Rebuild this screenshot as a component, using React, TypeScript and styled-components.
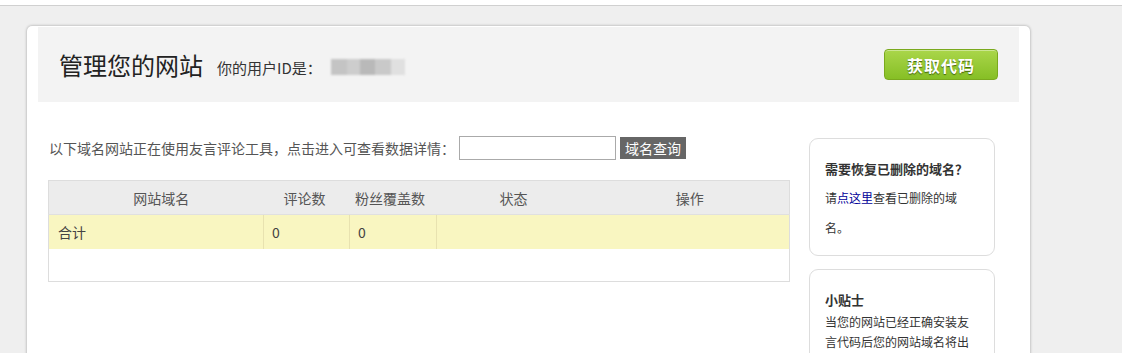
import styled, { createGlobalStyle } from "styled-components";

const GlobalStyle = createGlobalStyle`
  html, body {
    margin: 0;
    padding: 0;
  }
  body {
    background-color: #ffffff;
    font-family: "Noto Sans CJK SC", "Liberation Sans", sans-serif;
    color: #333333;
  }
`;

const Page = styled.div`
  margin-top: 5px;
  border-top: 1px solid #d0d0d0;
  background-color: #efefef;
  min-height: 347px;
  padding: 20px 0 0 27px;
  overflow: hidden;
`;

const Card = styled.div`
  width: 981px;
  min-height: 340px;
  padding: 1px 11px 0 11px;
  background-color: #ffffff;
  border-radius: 5px;
  box-shadow: 0 0 3px rgba(0, 0, 0, 0.35);
`;

const Header = styled.div`
  display: flex;
  align-items: center;
  height: 75px;
  padding: 0 21px 0 21px;
  background-color: #f3f3f3;
`;

const Title = styled.h1`
  margin: 0;
  font-size: 24px;
  font-weight: normal;
  color: #222222;
`;

const UserId = styled.span`
  margin-left: 14px;
  margin-top: 5px;
  font-size: 15px;
  color: #333333;
  display: flex;
  align-items: center;
`;

const Blur = styled.span`
  display: inline-flex;
  margin-left: 9px;
  height: 16px;
  filter: blur(0.8px);
`;

const BlurBlock = styled.span<{ $w: number; $c: string }>`
  width: ${(p) => p.$w}px;
  height: 16px;
  background-color: ${(p) => p.$c};
`;

const GetCode = styled.button`
  margin-left: auto;
  width: 114px;
  height: 31px;
  border: 1px solid #7aa91e;
  border-radius: 4px;
  background: linear-gradient(#aad64a, #86bf25);
  box-shadow: inset 0 1px 0 rgba(255, 255, 255, 0.4);
  color: #ffffff;
  font-family: "Noto Sans CJK SC", sans-serif;
  font-size: 16px;
  font-weight: bold;
  letter-spacing: 1px;
  text-shadow: 0 1px 1px rgba(40, 70, 0, 0.8);
`;

const Body = styled.div`
  display: flex;
  gap: 19px;
  padding: 35px 0 0 10px;
`;

const Main = styled.div`
  width: 742px;
`;

const SearchRow = styled.div`
  display: flex;
  align-items: center;
  height: 24px;
  margin-top: -1px;
  font-size: 14px;
  color: #555555;
`;

const Lead = styled.span`
  margin-left: 1px;
  margin-right: 4px;
`;

const SearchInput = styled.input`
  box-sizing: border-box;
  width: 157px;
  height: 24px;
  border: 1px solid #aaaaaa;
  padding: 0 4px;
`;

const SearchButton = styled.button`
  margin-left: 4px;
  height: 22px;
  padding: 0 5px;
  border: none;
  background-color: #666666;
  color: #ffffff;
  font-family: "Noto Sans CJK SC", sans-serif;
  font-size: 14px;
`;

const Table = styled.table`
  margin-top: 20px;
  width: 742px;
  table-layout: fixed;
  border-collapse: collapse;
  border: 1px solid #dddddd;
  font-size: 14px;
  color: #555555;
`;

const Th = styled.th<{ $w?: number; $shift?: number }>`
  box-sizing: border-box;
  width: ${(p) => (p.$w ? `${p.$w}px` : "auto")};
  height: 34px;
  padding: 0 ${(p) => (p.$shift && p.$shift < 0 ? -p.$shift : 0)}px 0
    ${(p) => (p.$shift && p.$shift > 0 ? p.$shift : 0)}px;
  background-color: #ececec;
  font-weight: normal;
  text-align: center;
  border-bottom: 1px solid #e0e0e0;
`;

const Td = styled.td`
  height: 34px;
  padding: 0 0 0 8px;
  background-color: #f9f6c1;
  border-left: 1px solid #e8e2b0;
  color: #444444;

  &:first-child {
    padding-left: 9px;
    border-left: none;
  }
`;

const EmptyRow = styled.tr`
  height: 32px;
`;

const Side = styled.div`
  display: flex;
  flex-direction: column;
  gap: 13px;
  width: 186px;
  margin-top: 1px;
`;

const SideBox = styled.div`
  box-sizing: border-box;
  width: 186px;
  padding: 18px 15px 12px 15px;
  border: 1px solid #dddddd;
  border-radius: 9px;
`;

const SideTitle = styled.h3`
  margin: 0;
  font-size: 13px;
  font-weight: bold;
  color: #333333;
  line-height: 24px;
`;

const SideText = styled.p<{ $lh: number; $w?: number }>`
  margin: ${(p) => (p.$lh > 24 ? "2px" : "0")} 0 0 0;
  max-width: ${(p) => (p.$w ? `${p.$w}px` : "none")};
  font-size: 12px;
  line-height: ${(p) => p.$lh}px;
  color: #333333;
`;

const Link = styled.a`
  color: #000099;
  text-decoration: none;
`;

export default function App() {
  return (
    <>
      <GlobalStyle />
      <Page>
        <Card>
          <Header>
            <Title>管理您的网站</Title>
            <UserId>
              你的用户ID是：
              <Blur>
                <BlurBlock $w={16} $c="#c4c4c4" />
                <BlurBlock $w={13} $c="#cdcdcd" />
                <BlurBlock $w={15} $c="#b9b9b9" />
                <BlurBlock $w={16} $c="#c9c9c9" />
                <BlurBlock $w={14} $c="#e0e0e0" />
              </Blur>
            </UserId>
            <GetCode>获取代码</GetCode>
          </Header>
          <Body>
            <Main>
              <SearchRow>
                <Lead>以下域名网站正在使用友言评论工具，点击进入可查看数据详情：</Lead>
                <SearchInput />
                <SearchButton>域名查询</SearchButton>
              </SearchRow>
              <Table>
                <thead>
                  <tr>
                    <Th $w={215} $shift={10}>网站域名</Th>
                    <Th $w={86} $shift={-4}>评论数</Th>
                    <Th $w={87} $shift={-6}>粉丝覆盖数</Th>
                    <Th $w={154}>状态</Th>
                    <Th>操作</Th>
                  </tr>
                </thead>
                <tbody>
                  <tr>
                    <Td>合计</Td>
                    <Td>0</Td>
                    <Td>0</Td>
                    <Td colSpan={2}></Td>
                  </tr>
                  <EmptyRow>
                    <td colSpan={5}></td>
                  </EmptyRow>
                </tbody>
              </Table>
            </Main>
            <Side>
              <SideBox>
                <SideTitle>需要恢复已删除的域名？</SideTitle>
                <SideText $lh={30} $w={140}>
                  请<Link href="#">点这里</Link>查看已删除的域名。
                </SideText>
              </SideBox>
              <SideBox>
                <SideTitle>小贴士</SideTitle>
                <SideText $lh={20}>
                  当您的网站已经正确安装友言代码后您的网站域名将出现在左侧列表中，点击域名即可进入管理。
                </SideText>
              </SideBox>
            </Side>
          </Body>
        </Card>
      </Page>
    </>
  );
}
